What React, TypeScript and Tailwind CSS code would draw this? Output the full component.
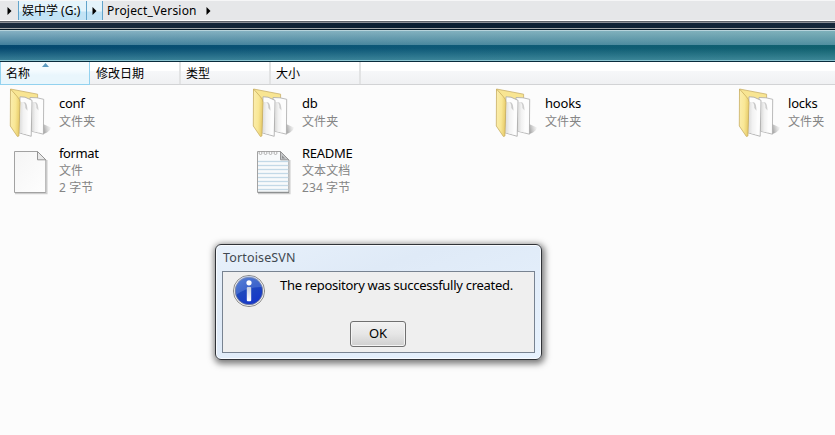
import React from "react";

function Folder({ id }: { id: string }) {
  return (
    <svg width="46" height="52" viewBox="0 0 46 52" className="block">
      <defs>
        <linearGradient id={id + "f"} x1="0" y1="0" x2="1" y2="0.2">
          <stop offset="0" stopColor="#fbeeb0" />
          <stop offset="0.6" stopColor="#f9e795" />
          <stop offset="1" stopColor="#e8cd6c" />
        </linearGradient>
        <linearGradient id={id + "p"} x1="0" y1="0" x2="1" y2="0">
          <stop offset="0" stopColor="#d9d9d8" />
          <stop offset="0.5" stopColor="#f2f2f2" />
          <stop offset="1" stopColor="#fbfbfb" />
        </linearGradient>
        <linearGradient id={id + "s"} x1="0" y1="0.3" x2="1" y2="0">
          <stop offset="0" stopColor="#666" stopOpacity="0.55" />
          <stop offset="1" stopColor="#999" stopOpacity="0" />
        </linearGradient>
      </defs>
      <path d="M35 46.3L39 44.5L42 42L43 39.5L35 36Z" fill={`url(#${id}s)`} />
      <path d="M2.5 1L29.6 6.2V12L30 40H12Z" fill="#f8e592" stroke="#c9b06a" strokeWidth="0.8" />
      <path d="M22 9.5L29 9.8L35.7 11.3L35.4 46.2L23.5 43.2Z" fill="#fdfdfd" stroke="#a9a9a9" strokeWidth="0.8" />
      <path d="M24.6 14C28 13.3 29.6 16 30 20L31 22.5L30.6 44.6L23.8 43Z" fill={`url(#${id}p)`} />
      <path d="M26 14C27.8 14.5 28.6 17.5 28.4 20L30.5 22.5C30.3 17 29.5 13.8 26 14Z" fill="#cfcfcf" />
      <path d="M12 8.8L17 9.2L24 12.3L23.2 48.3L11 44.8Z" fill="#fdfdfd" stroke="#a6a6a6" strokeWidth="0.8" />
      <path d="M13 14C16.8 13.3 18.5 16 18.9 20L20 22.8L19.5 46.6L11 44.4Z" fill={`url(#${id}p)`} />
      <path d="M15 14C16.8 14.5 17.5 17.5 17.3 20L19.5 22.8C19.3 17 18.5 13.8 15 14Z" fill="#cacaca" />
      <path d="M2.5 1L9 8.3Q12 11 12 14.5L10.9 48L9.4 48.5L2.3 38Z" fill={`url(#${id}f)`} stroke="#c9af62" strokeWidth="0.8" />
    </svg>
  );
}

function Page({ lined }: { lined?: boolean }) {
  return (
    <svg width="46" height="52" viewBox="0 0 46 52" className="block">
      <defs>
        <linearGradient id="sheet" x1="0" y1="0" x2="1" y2="1">
          <stop offset="0" stopColor="#f5f5f5" />
          <stop offset="1" stopColor="#fefefe" />
        </linearGradient>
      </defs>
      <path d="M7 46.5H38.9V13" fill="none" stroke="#cecece" strokeWidth="1.3" />
      <path d="M6.5 4.5H29.5L37.8 12.8V45.5H6.5Z" fill={lined ? "#f8fafb" : "url(#sheet)"} stroke="#a2a2a2" />
      {lined && (
        <g>
          {[14, 18, 22, 26, 30, 34, 38, 42].map((y) => (
            <path key={y} d={`M7 ${y + 0.5}H37.3`} stroke="#c3d9e7" strokeWidth="1.3" />
          ))}
          <path d="M7 45.4H38" stroke="#8d9091" strokeWidth="1.3" />
          {[9.5, 14.5, 19.5, 24.5].map((x) => (
            <circle key={x} cx={x} cy="6" r="1.5" fill="#fafafa" stroke="#9a9a9a" strokeWidth="0.7" />
          ))}
        </g>
      )}
      <path d="M29.5 4.5V12.8H37.8Z" fill={lined ? "#c4c6c8" : "#e9e9e9"} stroke="#949494" />
      {lined && <path d="M31 8.5V11.5H34Z" fill="#8e9091" />}
    </svg>
  );
}

function Item({ icon, name, lines, track, compact }: { icon: React.ReactNode; name: string; lines: string[]; track: string; compact?: boolean }) {
  return (
    <div className="flex w-[243px] shrink-0">
      <div className="w-[51px] shrink-0">{icon}</div>
      <div className={`whitespace-nowrap text-[12px] leading-[17px] ${compact ? "-mt-[2px]" : "pt-[7px]"}`}>
        <div className={`text-[13px] text-black ${compact ? "" : "pb-px"} ${track}`}>{name}</div>
        {lines.map((l) => (
          <div key={l} className="tracking-[0.1px] text-[#858585]">{l}</div>
        ))}
      </div>
    </div>
  );
}

const Arrow = () => (
  <svg width="5" height="8" viewBox="0 0 5 8" className="block">
    <path d="M0.5 0L4.5 4L0.5 8Z" fill="#000" />
  </svg>
);

function Column({ label }: { label: string }) {
  return (
    <div className="h-[22px] w-[90px] border-r-2 border-[#e2e3e4] pl-[5px] pt-[3px]">{label}</div>
  );
}

export default function App() {
  return (
    <div className="relative flex h-[435px] w-[835px] flex-col overflow-hidden bg-[#fcfcfc] font-['Noto_Sans','Noto_Sans_CJK_SC',sans-serif] text-[12px] leading-[17px] text-black">
      <div className="flex h-[21px] shrink-0 border-b border-t border-b-white border-t-[#f6f6f7] bg-[#e6e7e9]">
        <div className="flex w-[18px] items-center pl-[7px]"><Arrow /></div>
        <div className="flex w-[69px] items-center whitespace-nowrap border-x border-[#62a4cb] bg-linear-to-b from-[#e5f4fb] from-50% to-[#c2e3f5] to-60% pl-[3px] pb-px">娱中学&nbsp;(G:)</div>
        <div className="flex w-[16px] items-center border-r border-[#62a4cb] bg-linear-to-b from-[#e5f4fb] from-50% to-[#c2e3f5] to-60% pl-[5px]"><Arrow /></div>
        <div className="flex w-[103px] items-center whitespace-nowrap pb-px pl-[4px] tracking-[0.2px]">Project_Version</div>
        <div className="flex items-center"><Arrow /></div>
      </div>
      <div className="h-px shrink-0 bg-[#5d6269]" />
      <div className="h-px shrink-0 bg-[#8b8f96]" />
      <div className="h-[5px] shrink-0 bg-linear-to-r from-[#1c2c3e] via-[#0a1e31] to-[#15273a]" />
      <div className="h-px shrink-0 bg-[#a3a8a9]" />
      <div className="h-px shrink-0 bg-[#051825]" />
      <div className="h-px shrink-0 bg-[#b6d3db]" />
      <div className="h-[14px] shrink-0 bg-linear-to-b from-[#86b1c3] to-[#417f9c]">
        <div className="h-full bg-linear-to-r from-transparent to-[#6fb0a855]" />
      </div>
      <div className="h-[15px] shrink-0 bg-linear-to-r from-[#05486f] via-[#0d5877] to-[#11616f]">
        <div className="h-full bg-linear-to-b from-transparent from-20% to-[#5098a8aa]" />
      </div>
      <div className="h-px shrink-0 bg-[#8bc4d0]" />
      <div className="h-px shrink-0 bg-[#082b3c]" />
      <div className="flex h-[23px] shrink-0 border-b border-[#d2d3d5] bg-linear-to-b from-white from-40% via-[#f6f7f9] via-41% to-[#f0f1f3]">
        <div className="relative h-[23px] w-[90px] border-b border-l border-r border-[#93d2ef] bg-linear-to-b from-[#f4fbfe] from-40% to-[#e9f6fc] to-60% pl-[5px] pt-[3px]">
          <svg width="7" height="4" viewBox="0 0 7 4" className="absolute left-[41px] top-px"><path d="M3.5 0L7 4H0Z" fill="#5c9ac0" /></svg>
          名称
        </div>
        <div className="h-[22px] w-[91px] border-r-2 border-[#e2e3e4] pl-[6px] pt-[3px]">修改日期</div>
        <Column label="类型" />
        <Column label="大小" />
      </div>
      <div className="flex h-[62px] shrink-0 pl-[8px] pt-[3px]">
        <Item icon={<Folder id="a" />} name="conf" lines={["文件夹"]} track="tracking-[-0.3px]" />
        <Item icon={<Folder id="b" />} name="db" lines={["文件夹"]} track="tracking-[-0.2px]" />
        <Item icon={<Folder id="c" />} name="hooks" lines={["文件夹"]} track="tracking-[-0.2px]" />
        <Item icon={<Folder id="d" />} name="locks" lines={["文件夹"]} track="tracking-[-0.2px]" />
      </div>
      <div className="flex shrink-0 pl-[8px]">
        <Item compact icon={<Page />} name="format" lines={["文件", "2 字节"]} track="tracking-[-0.4px]" />
        <Item compact icon={<Page lined />} name="README" lines={["文本文档", "234 字节"]} track="tracking-[-0.3px]" />
      </div>

      <div className="absolute left-[215px] top-[244px] flex h-[116px] w-[327px] flex-col rounded-[6px] border-[1.5px] border-[#303338] bg-linear-to-br from-[#e8f1fb] via-[#dfeaf7] via-35% to-[#e7f2fe] px-[6px] shadow-[1px_2px_6px_2px_rgba(0,0,0,0.5)] ring-1 ring-inset ring-[#f8fbff]">
        <div className="h-[26px] shrink-0 pl-px pt-[4px] text-[12.5px] tracking-[0.15px] text-[#41484f]">TortoiseSVN</div>
        <div className="flex h-[82px] w-[313px] shrink-0 flex-col border border-[#788391] bg-[#efefef]">
          <div className="flex h-[49px] pl-[9px] pt-[2px]">
            <svg width="34" height="34" viewBox="0 0 34 34" className="block shrink-0">
              <defs>
                <linearGradient id="info" x1="0" y1="0" x2="0.6" y2="1">
                  <stop offset="0" stopColor="#4773cf" />
                  <stop offset="0.5" stopColor="#1f49bd" />
                  <stop offset="1" stopColor="#1637c9" />
                </linearGradient>
                <linearGradient id="stem" x1="0" y1="0" x2="0" y2="1">
                  <stop offset="0" stopColor="#c6cde0" />
                  <stop offset="1" stopColor="#fff" />
                </linearGradient>
              </defs>
              <circle cx="17" cy="17" r="15.6" fill="#f4f4f4" stroke="#8d8d8d" />
              <circle cx="17" cy="17" r="13.8" fill="url(#info)" stroke="#7c8398" strokeWidth="0.8" />
              <path d="M4 17A13 13 0 0 1 30 13Q15 13 4 21Z" fill="#7da0e8" opacity="0.35" />
              <circle cx="17" cy="8.8" r="2.6" fill="#fff" />
              <rect x="14.8" y="13" width="4.4" height="14.2" rx="1" fill="url(#stem)" />
            </svg>
            <div className="whitespace-nowrap pl-[14px] pt-[3px] text-[13px] tracking-[-0.28px]">The repository was successfully created.</div>
          </div>
          <button className="ml-[127px] h-[26px] w-[56px] shrink-0 rounded-[3px] border border-[#707070] bg-linear-to-b from-[#f2f2f2] from-0% via-[#e6e6e6] via-50% to-[#cfcfcf] pb-[2px] text-[13px] leading-[22px] shadow-[inset_0_0_0_1px_#f4f4f4]">OK</button>
        </div>
      </div>
    </div>
  );
}
